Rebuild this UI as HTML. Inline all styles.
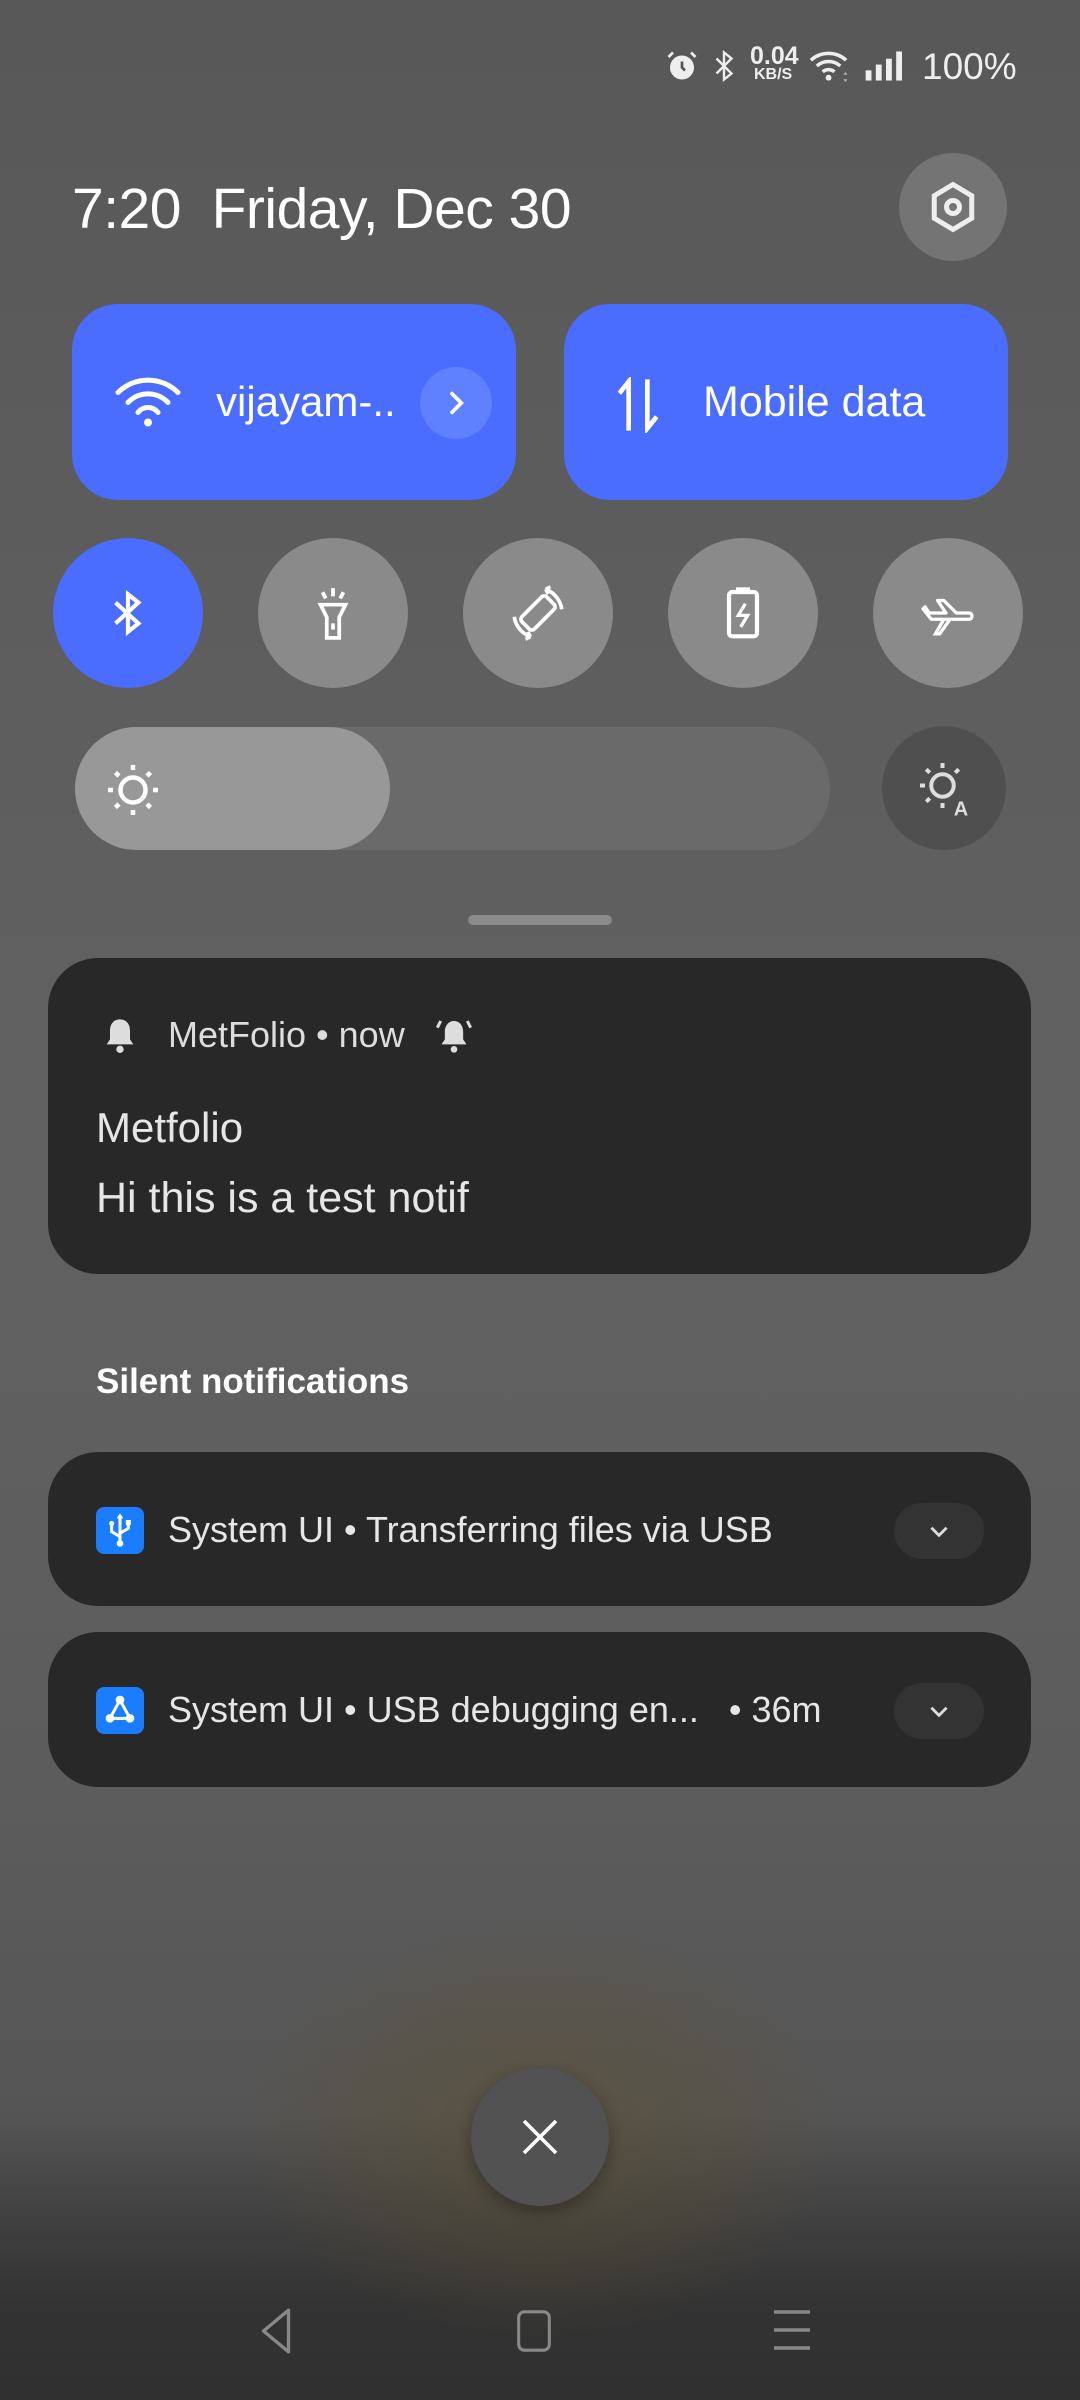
<!DOCTYPE html>
<html><head><meta charset="utf-8"><style>
*{margin:0;padding:0;box-sizing:border-box}
body{width:1080px;height:2400px;overflow:hidden;font-family:"Liberation Sans",sans-serif;color:#fff;position:relative;
background:linear-gradient(180deg,#585858 0%,#5e5e5e 30%,#616161 50%,#5c5c5c 75%,#555 88%,#3e3e3e 93%,#333 96%,#303030 100%)}
.a{position:absolute}
.glow{left:240px;top:1920px;width:600px;height:420px;border-radius:50%;background:radial-gradient(ellipse at center,rgba(95,80,50,.55) 0%,rgba(95,80,50,.25) 45%,rgba(95,80,50,0) 70%)}
.tile{background:#4a6cff;border-radius:46px;top:304px;height:196px}
.rb{width:150px;height:150px;border-radius:50%;background:#8a8a8a;top:538px}
.card{background:#282828;border-radius:50px;left:48px;width:983px}
.txt{white-space:nowrap}
</style></head><body>
<div class="a glow"></div>

<!-- status bar -->
<svg class="a" style="left:664px;top:48px" width="36" height="36" viewBox="0 0 24 24"><circle cx="12" cy="13" r="8" fill="#eee"/><path d="M12 9v4l2 2" stroke="#555" stroke-width="1.8" fill="none"/><path d="M3 6l3-3M21 6l-3-3" stroke="#eee" stroke-width="1.8"/></svg>
<svg class="a" style="left:712px;top:48px" width="24" height="36" viewBox="0 0 16 24"><path d="M3 7l10 10-5 4V3l5 4L3 17" stroke="#eee" stroke-width="1.6" fill="none"/></svg>
<div class="a txt" style="left:750px;top:44px;font-size:25px;font-weight:bold;color:#eee;line-height:24px">0.04<br><span style="font-size:16px;line-height:14px;display:block;padding-left:4px">KB/S</span></div>
<svg class="a" style="left:808px;top:48px" width="44" height="36" viewBox="0 0 30 24"><path d="M2 8a18 18 0 0 1 24 0M6 12a12 12 0 0 1 16 0M10 16a6 6 0 0 1 8 0" stroke="#eee" stroke-width="2.4" fill="none"/><circle cx="14" cy="20" r="2" fill="#eee"/><path d="M24 18l3 0-1.5-2zM24 21h3l-1.5 2z" fill="#aaa"/></svg>
<svg class="a" style="left:862px;top:50px" width="48" height="32" viewBox="0 0 32 22"><rect x="2" y="14" width="4" height="7" fill="#eee"/><rect x="9" y="10" width="4" height="11" fill="#eee"/><rect x="16" y="6" width="4" height="15" fill="#eee"/><rect x="23" y="1" width="4" height="20" fill="#eee"/></svg>
<div class="a txt" style="left:922px;top:46px;font-size:37px;color:#eee">100%</div>

<!-- time -->
<div class="a txt" style="left:72px;top:176px;font-size:57px;letter-spacing:-0.5px;color:#fff">7:20&nbsp; Friday, Dec 30</div>
<div class="a" style="left:899px;top:153px;width:108px;height:108px;border-radius:50%;background:#747474"></div>
<svg class="a" style="left:923px;top:177px" width="60" height="60" viewBox="0 0 24 24"><path d="M12 3l7.5 4.5v9L12 21l-7.5-4.5v-9z" stroke="#eee" stroke-width="2" fill="none"/><circle cx="12" cy="12" r="2.6" stroke="#eee" stroke-width="2" fill="none"/></svg>

<!-- big tiles -->
<div class="a tile" style="left:72px;width:444px"></div>
<svg class="a" style="left:113px;top:370px" width="70" height="60" viewBox="0 0 28 24"><path d="M2 9a17 17 0 0 1 24 0M6 13a11 11 0 0 1 16 0M10 17a5 5 0 0 1 8 0" stroke="#fff" stroke-width="2" fill="none" stroke-linecap="round"/><circle cx="14" cy="21" r="1.6" fill="#fff"/></svg>
<div class="a txt" style="left:216px;top:378px;font-size:42px">vijayam-..</div>
<div class="a" style="left:420px;top:367px;width:72px;height:72px;border-radius:50%;background:#5f80ff"></div>
<svg class="a" style="left:440px;top:387px" width="32" height="32" viewBox="0 0 24 24"><path d="M9 5l7 7-7 7" stroke="#fff" stroke-width="2.8" fill="none" stroke-linecap="round"/></svg>
<div class="a tile" style="left:564px;width:444px"></div>
<svg class="a" style="left:614px;top:377px" width="48" height="56" viewBox="0 0 20 24"><path d="M6 23V2L2 7M14 1v21l4-5" stroke="#fff" stroke-width="2" fill="none"/></svg>
<div class="a txt" style="left:703px;top:378px;font-size:43px">Mobile data</div>

<!-- round buttons -->
<div class="a rb" style="left:53px;background:#4a6cff"></div>
<svg class="a" style="left:103px;top:588px" width="50" height="50" viewBox="0 0 24 24"><path d="M6 7l11 10-5 4V3l5 4L6 17" stroke="#fff" stroke-width="2" fill="none"/></svg>
<div class="a rb" style="left:258px"></div>
<svg class="a" style="left:308px;top:586px" width="50" height="54" viewBox="0 0 24 26"><path d="M6 9h12l-3 6v10H9V15z" stroke="#fff" stroke-width="1.8" fill="none"/><path d="M12 18v3M12 1v4M7 3l1.5 3M17 3l-1.5 3" stroke="#fff" stroke-width="1.8"/></svg>
<div class="a rb" style="left:463px"></div>
<svg class="a" style="left:508px;top:583px" width="60" height="60" viewBox="0 0 24 24"><rect x="8.5" y="5" width="7" height="14" rx="1.5" transform="rotate(45 12 12)" stroke="#fff" stroke-width="1.5" fill="none"/><path d="M15 2.5a10 10 0 0 1 6.5 8" stroke="#fff" stroke-width="1.5" fill="none"/><path d="M15 2.5l2 -1M15 2.5l1 2" stroke="#fff" stroke-width="1.3"/><path d="M9 21.5a10 10 0 0 1-6.5-8" stroke="#fff" stroke-width="1.5" fill="none"/><path d="M9 21.5l-2 1M9 21.5l-1-2" stroke="#fff" stroke-width="1.3"/></svg>
<div class="a rb" style="left:668px"></div>
<svg class="a" style="left:718px;top:585px" width="50" height="56" viewBox="0 0 20 24"><rect x="4" y="3" width="12" height="19" rx="1.5" stroke="#fff" stroke-width="1.8" fill="none"/><rect x="7" y="1" width="6" height="2" fill="#fff"/><path d="M11 8l-3 5h4l-3 5" stroke="#fff" stroke-width="1.4" fill="none"/></svg>
<div class="a rb" style="left:873px"></div>
<svg class="a" style="left:918px;top:588px" width="60" height="50" viewBox="0 0 28 24"><path d="M2 10l4 5h18c2 0 2-3 0-3h-6L12 6H9l4 6H5L3 9z" stroke="#fff" stroke-width="1.6" fill="none" stroke-linejoin="round"/><path d="M12 15l-4 7h2l5-7" stroke="#fff" stroke-width="1.6" fill="none"/></svg>

<!-- slider -->
<div class="a" style="left:75px;top:727px;width:755px;height:123px;border-radius:62px;background:#6a6a6a"></div>
<div class="a" style="left:75px;top:727px;width:315px;height:123px;border-radius:62px;background:#989898"></div>
<svg class="a" style="left:103px;top:760px" width="60" height="60" viewBox="0 0 24 24"><circle cx="12" cy="12" r="5" stroke="#fff" stroke-width="1.8" fill="none"/><path d="M12 2v2M12 20v2M2 12h2M20 12h2M5 5l1.4 1.4M17.6 17.6L19 19M5 19l1.4-1.4M17.6 6.4L19 5" stroke="#fff" stroke-width="1.8"/></svg>
<div class="a" style="left:882px;top:726px;width:124px;height:124px;border-radius:50%;background:#4f4f4f"></div>
<svg class="a" style="left:915px;top:758px" width="60" height="60" viewBox="0 0 24 24"><circle cx="11" cy="11" r="4.5" stroke="#ddd" stroke-width="1.6" fill="none"/><path d="M11 2v2M2 11h2M4.5 4.5l1.4 1.4M17.5 4.5l-1.4 1.4M4.5 17.5l1.4-1.4M11 18v2" stroke="#ddd" stroke-width="1.6"/><text x="15.5" y="23" font-size="8" font-weight="bold" fill="#ddd" font-family="Liberation Sans">A</text></svg>

<div class="a" style="left:468px;top:915px;width:144px;height:10px;border-radius:5px;background:#8a8a8a"></div>

<!-- card 1 -->
<div class="a card" style="top:958px;height:316px"></div>
<svg class="a" style="left:100px;top:1016px" width="40" height="40" viewBox="0 0 24 24"><path d="M12 2c-4 0-6 3-6 7v5l-2 3h16l-2-3V9c0-4-2-7-6-7z" fill="#ddd"/><circle cx="12" cy="20" r="2.2" fill="#ddd"/></svg>
<div class="a txt" style="left:168px;top:1014px;font-size:36px;color:#ddd">MetFolio • now</div>
<svg class="a" style="left:434px;top:1016px" width="40" height="40" viewBox="0 0 24 24"><path d="M12 3c-3.5 0-5.5 3-5.5 6.5V14l-2 3h15l-2-3V9.5C17.5 6 15.5 3 12 3z" fill="#ddd"/><circle cx="12" cy="20" r="2" fill="#ddd"/><path d="M4 3L2 7M20 3l2 4" stroke="#ddd" stroke-width="1.8"/></svg>
<div class="a txt" style="left:96px;top:1104px;font-size:42px;color:#e6e6e6">Metfolio</div>
<div class="a txt" style="left:96px;top:1174px;font-size:43px;color:#e6e6e6">Hi this is a test notif</div>

<div class="a txt" style="left:96px;top:1362px;font-size:35px;font-weight:bold;color:#fff">Silent notifications</div>

<!-- card 2 -->
<div class="a card" style="top:1452px;height:154px"></div>
<div class="a" style="left:96px;top:1507px;width:48px;height:47px;border-radius:8px;background:#1a7cff"></div>
<svg class="a" style="left:100px;top:1510px" width="40" height="40" viewBox="0 0 24 24"><path d="M12 3v18M12 16l-5-3V9M12 14l5-3V8" stroke="#fff" stroke-width="1.8" fill="none"/><path d="M12 2l-2 3h4z" fill="#fff"/><circle cx="7" cy="8" r="1.5" fill="#fff"/><rect x="15.5" y="6" width="3" height="3" fill="#fff"/><circle cx="12" cy="20" r="2" fill="#fff"/></svg>
<div class="a txt" style="left:168px;top:1509px;font-size:36px;color:#e6e6e6">System UI • Transferring files via USB</div>
<div class="a" style="left:894px;top:1503px;width:90px;height:56px;border-radius:28px;background:#333"></div>
<svg class="a" style="left:926px;top:1518px" width="26" height="26" viewBox="0 0 24 24"><path d="M5 9l7 7 7-7" stroke="#ddd" stroke-width="2.6" fill="none"/></svg>

<!-- card 3 -->
<div class="a card" style="top:1632px;height:155px"></div>
<div class="a" style="left:96px;top:1687px;width:48px;height:47px;border-radius:8px;background:#1a7cff"></div>
<svg class="a" style="left:100px;top:1690px" width="40" height="40" viewBox="0 0 24 24"><path d="M12 6L6 17h12z" stroke="#fff" stroke-width="1.8" fill="none"/><circle cx="12" cy="6" r="2.6" fill="#fff"/><circle cx="6" cy="17" r="2.6" fill="#fff"/><circle cx="18" cy="17" r="2.6" fill="#fff"/></svg>
<div class="a txt" style="left:168px;top:1689px;font-size:36px;color:#e6e6e6">System UI • USB debugging en...&nbsp;&nbsp; • 36m</div>
<div class="a" style="left:894px;top:1683px;width:90px;height:56px;border-radius:28px;background:#333"></div>
<svg class="a" style="left:926px;top:1698px" width="26" height="26" viewBox="0 0 24 24"><path d="M5 9l7 7 7-7" stroke="#ddd" stroke-width="2.6" fill="none"/></svg>

<!-- close -->
<div class="a" style="left:471px;top:2068px;width:138px;height:138px;border-radius:50%;background:#525252;box-shadow:0 6px 16px rgba(0,0,0,.3)"></div>
<svg class="a" style="left:516px;top:2113px" width="48" height="48" viewBox="0 0 24 24"><path d="M4 4l16 16M20 4L4 20" stroke="#fff" stroke-width="1.8"/></svg>

<!-- nav -->
<svg class="a" style="left:254px;top:2306px" width="44" height="50" viewBox="0 0 20 24"><path d="M16 2L4 12l12 10z" stroke="#888" stroke-width="1.6" fill="none" stroke-linejoin="round"/></svg>
<svg class="a" style="left:514px;top:2308px" width="40" height="46" viewBox="0 0 20 24"><rect x="2" y="2" width="16" height="20" rx="3" stroke="#888" stroke-width="1.6" fill="none"/></svg>
<svg class="a" style="left:772px;top:2308px" width="40" height="44" viewBox="0 0 20 22"><path d="M1 2h18M1 11h18M1 20h18" stroke="#888" stroke-width="1.8"/></svg>
</body></html>
